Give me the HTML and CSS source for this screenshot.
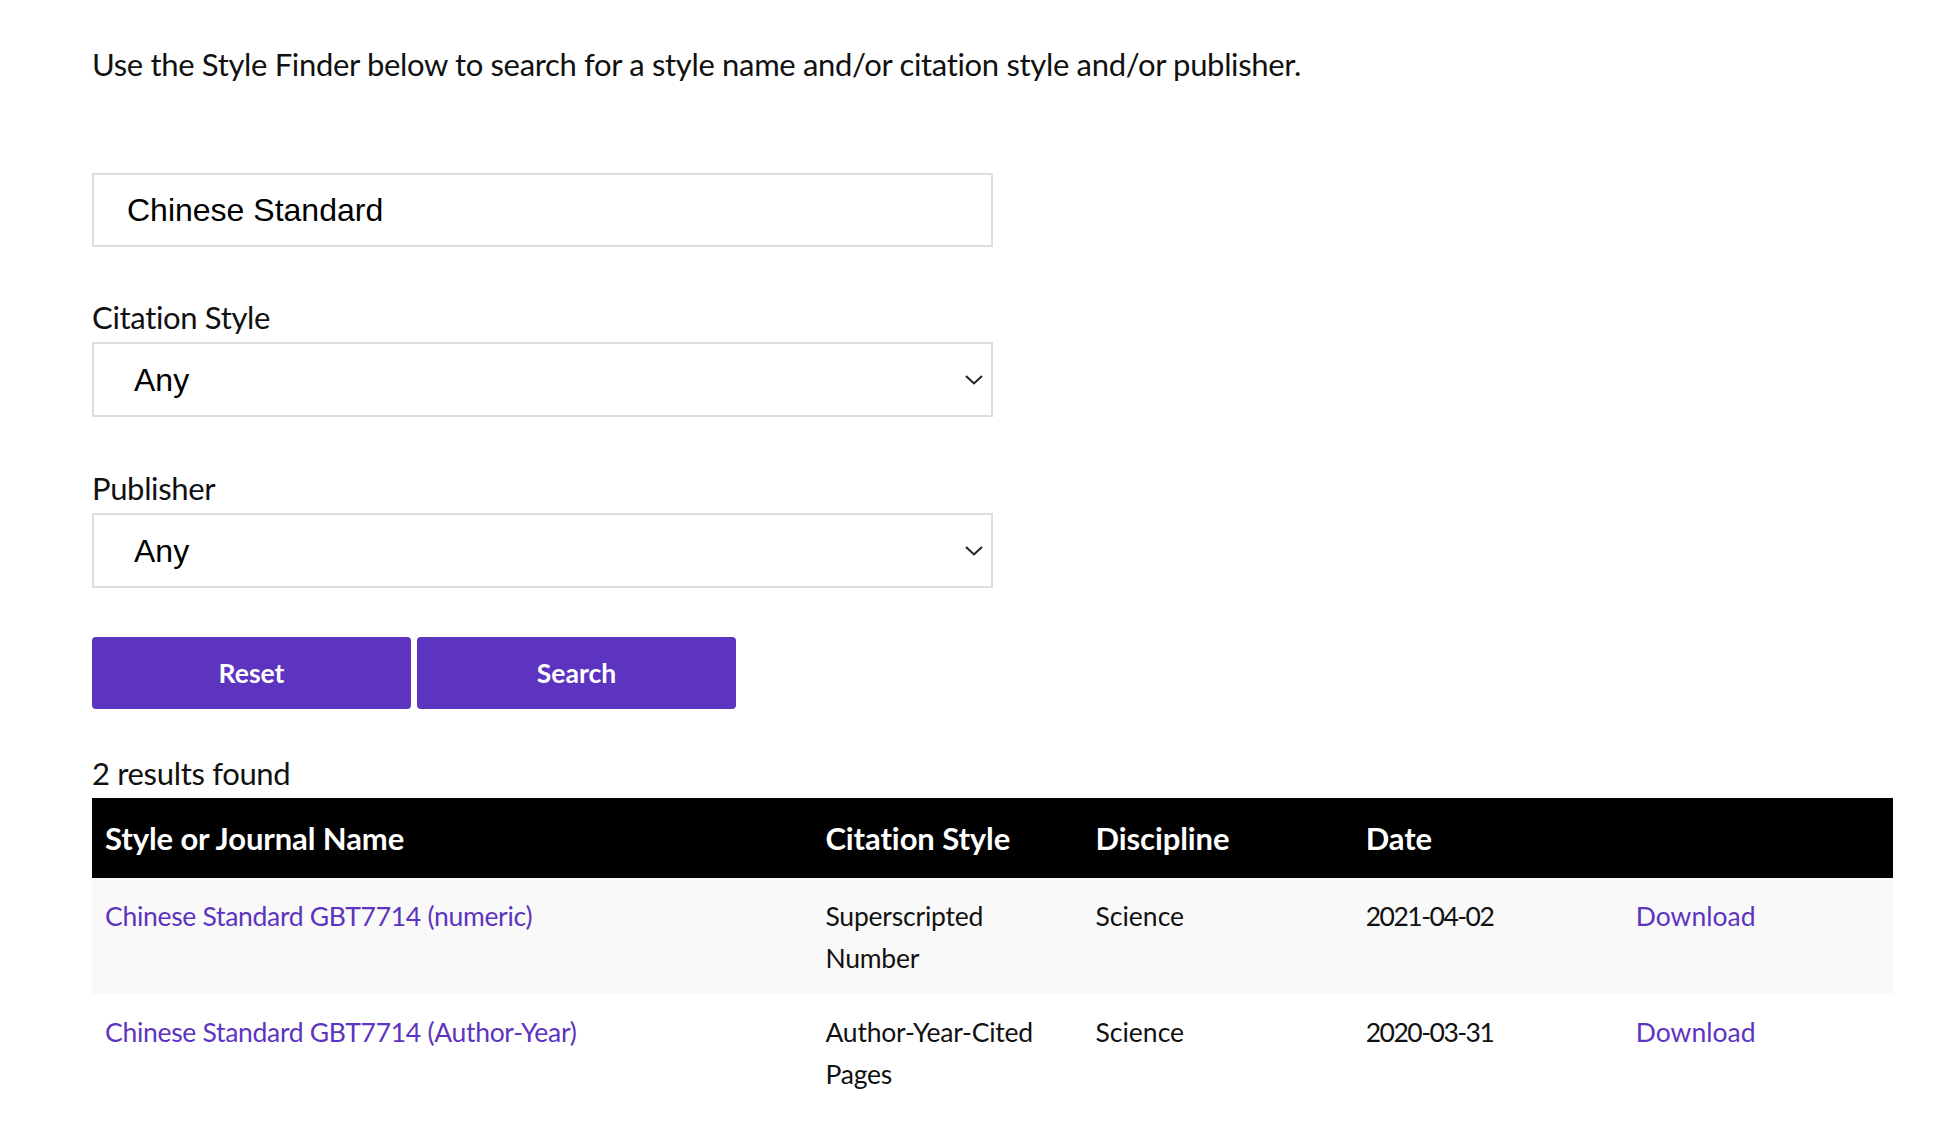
FILE: index.html
```html
<!DOCTYPE html>
<html lang="en">
<head>
<meta charset="utf-8">
<title>Style Finder</title>
<link rel="stylesheet" href="styles.css">
</head>
<body>
<main class="finder">
  <p class="intro">Use the Style Finder below to search for a style name and/or citation style and/or publisher.</p>
  <form class="form">
    <input class="text-input" type="text" value="Chinese Standard" aria-label="Style name">
    <div class="field">
      <label class="field-label" for="cs">Citation Style</label>
      <div class="select-wrap">
        <select class="select" id="cs"><option>Any</option></select>
        <svg class="chevron" width="18" height="10" viewBox="0 0 18 10"><polyline points="1,1 9,8.5 17,1" fill="none" stroke="#222" stroke-width="2"/></svg>
      </div>
    </div>
    <div class="field field-second">
      <label class="field-label" for="pub">Publisher</label>
      <div class="select-wrap">
        <select class="select" id="pub"><option>Any</option></select>
        <svg class="chevron" width="18" height="10" viewBox="0 0 18 10"><polyline points="1,1 9,8.5 17,1" fill="none" stroke="#222" stroke-width="2"/></svg>
      </div>
    </div>
    <div class="actions">
      <button class="btn" type="button">Reset</button>
      <button class="btn" type="button">Search</button>
    </div>
  </form>
  <p class="count">2 results found</p>
  <table class="results">
    <colgroup>
      <col class="col-name">
      <col class="col-std">
      <col class="col-std">
      <col class="col-std">
      <col class="col-std">
    </colgroup>
    <thead>
      <tr>
        <th>Style or Journal Name</th>
        <th>Citation Style</th>
        <th>Discipline</th>
        <th>Date</th>
        <th></th>
      </tr>
    </thead>
    <tbody>
      <tr>
        <td><a class="title" href="#">Chinese Standard GBT7714 (numeric)</a></td>
        <td class="style">Superscripted Number</td>
        <td>Science</td>
        <td class="date">2021-04-02</td>
        <td><a href="#">Download</a></td>
      </tr>
      <tr>
        <td><a class="title" href="#">Chinese Standard GBT7714 (Author-Year)</a></td>
        <td class="style">Author-Year-Cited Pages</td>
        <td>Science</td>
        <td class="date">2020-03-31</td>
        <td><a href="#">Download</a></td>
      </tr>
    </tbody>
  </table>
</main>
</body>
</html>
```
FILE: styles.css
```css
html, body {
  margin: 0;
  background: #ffffff;
}

body {
  color: #111111;
  font-family: "Lato", "Open Sans", sans-serif;
}

.finder {
  padding: 43px 45px 0 92px;
}

.intro {
  margin: 0;
  font-size: 31px;
  line-height: 42px;
  letter-spacing: -0.33px;
}

.form {
  display: flex;
  flex-direction: column;
  align-items: flex-start;
  margin-top: 88px;
}

.text-input {
  box-sizing: border-box;
  width: 901px;
  height: 74px;
  margin: 0;
  padding: 0 0 0 33px;
  border: 2px solid #dddddd;
  border-radius: 0;
  background: #ffffff;
  color: #000000;
  font-family: "Liberation Sans", Arial, sans-serif;
  font-size: 32px;
  outline: none;
}

.field {
  display: flex;
  flex-direction: column;
  gap: 4px;
  margin-top: 49px;
}

.field-second {
  margin-top: 50px;
}

.field-label {
  font-size: 31px;
  line-height: 42px;
  letter-spacing: -0.33px;
}

.select-wrap {
  display: grid;
  align-items: center;
  width: 901px;
}

.select {
  grid-area: 1 / 1;
  box-sizing: border-box;
  width: 100%;
  height: 75px;
  margin: 0;
  padding: 0 0 0 40px;
  border: 2px solid #dddddd;
  border-radius: 0;
  background: #ffffff;
  color: #000000;
  font-family: "Liberation Sans", Arial, sans-serif;
  font-size: 32px;
  -webkit-appearance: none;
  appearance: none;
  outline: none;
}

.chevron {
  grid-area: 1 / 1;
  justify-self: end;
  margin-right: 10px;
  pointer-events: none;
}

.actions {
  display: flex;
  gap: 6px;
  margin-top: 49px;
}

.btn {
  width: 319px;
  height: 72px;
  border: 0;
  border-radius: 4px;
  background: #5d34bf;
  color: #ffffff;
  font-family: "Lato", "Open Sans", sans-serif;
  font-size: 26.5px;
  font-weight: 700;
  cursor: pointer;
}

.count {
  margin: 43px 0 4px;
  font-size: 31px;
  line-height: 42px;
  letter-spacing: -0.33px;
}

.results {
  width: 100%;
  table-layout: fixed;
  border-collapse: collapse;
  font-size: 26.5px;
  line-height: 42px;
}

.col-name {
  width: 40%;
}

.col-std {
  width: 15%;
}

.results th {
  padding: 19px 13px 19px;
  background: #000000;
  color: #ffffff;
  font-size: 31px;
  font-weight: 700;
  letter-spacing: -0.1px;
  text-align: left;
}

.results td {
  padding: 17px 13px 15px;
  vertical-align: top;
}

.results td.style {
  letter-spacing: -0.2px;
}

.results td.date {
  letter-spacing: -1.5px;
}

.results tbody tr:nth-child(odd) {
  background: #f9f9f9;
}

.results a {
  color: #5d34bf;
  text-decoration: none;
}

.results a.title {
  letter-spacing: -0.3px;
}
```
